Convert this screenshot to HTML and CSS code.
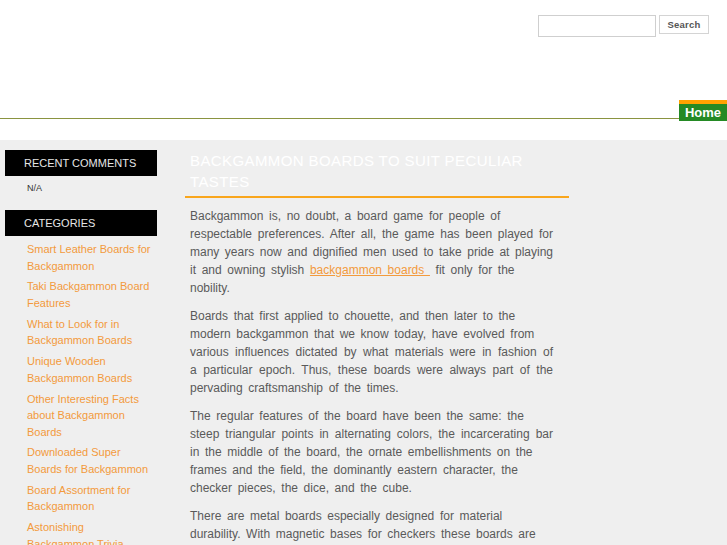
FILE: index.html
```html
<!DOCTYPE html>
<html>
<head>
<meta charset="utf-8">
<title>Backgammon Boards</title>
<link rel="stylesheet" href="styles.css">
</head>
<body>
<header class="header">
  <form class="search">
    <input class="search-input" type="text">
    <button class="search-btn" type="button">Search</button>
  </form>
  <nav class="nav">
    <a class="nav-home" href="#">Home</a>
  </nav>
</header>
<div class="main">
  <aside class="sidebar">
    <h3 class="widget-title">Recent Comments</h3>
    <ul class="recent">
      <li>N/A</li>
    </ul>
    <h3 class="widget-title">Categories</h3>
    <ul class="cats">
      <li><a href="#">Smart Leather Boards for Backgammon</a></li>
      <li><a href="#">Taki Backgammon Board Features</a></li>
      <li><a href="#">What to Look for in Backgammon Boards</a></li>
      <li><a href="#">Unique Wooden Backgammon Boards</a></li>
      <li><a href="#">Other Interesting Facts about Backgammon Boards</a></li>
      <li><a href="#">Downloaded Super Boards for Backgammon</a></li>
      <li><a href="#">Board Assortment for Backgammon</a></li>
      <li><a href="#">Astonishing Backgammon Trivia</a></li>
    </ul>
  </aside>
  <article class="content">
    <h1 class="post-title">Backgammon Boards to Suit Peculiar Tastes</h1>
    <div class="post-body">
      <p><span class="ln">Backgammon is, no doubt, a board game for people of</span><span class="ln full">respectable preferences. After all, the game has been played for</span><span class="ln full">many years now and dignified men used to take pride at playing</span><span class="ln">it and owning stylish <a href="#">backgammon boards&nbsp;</a> fit only for the</span><span class="ln">nobility.</span></p>
      <p><span class="ln">Boards that first applied to chouette, and then later to the</span><span class="ln">modern backgammon that we know today, have evolved from</span><span class="ln full">various influences dictated by what materials were in fashion of</span><span class="ln full">a particular epoch. Thus, these boards were always part of the</span><span class="ln">pervading craftsmanship of the times.</span></p>
      <p><span class="ln">The regular features of the board have been the same: the</span><span class="ln full">steep triangular points in alternating colors, the incarcerating bar</span><span class="ln">in the middle of the board, the ornate embellishments on the</span><span class="ln">frames and the field, the dominantly eastern character, the</span><span class="ln">checker pieces, the dice, and the cube.</span></p>
      <p><span class="ln">There are metal boards especially designed for material</span><span class="ln">durability. With magnetic bases for checkers these boards are</span></p>
    </div>
  </article>
</div>
</body>
</html>
```

FILE: styles.css
```css
html, body {
  margin: 0;
  padding: 0;
  background: #ffffff;
  font-family: "Liberation Sans", Arial, sans-serif;
}

.header {
  height: 118px;
  border-bottom: 1px solid #8a9440;
  display: flex;
  flex-direction: column;
  align-items: flex-end;
  justify-content: space-between;
  box-sizing: content-box;
}

.search {
  display: flex;
  align-items: flex-start;
  gap: 3px;
  margin: 15px 18px 0 0;
}

.search-input {
  width: 118px;
  height: 22px;
  box-sizing: border-box;
  border: 1px solid #cfcfcf;
  margin: 0;
  padding: 2px;
  background: #fff;
}

.search-btn {
  width: 50px;
  height: 19px;
  box-sizing: border-box;
  border: 1px solid #d4d4d4;
  background: #fff;
  margin: 0;
  padding: 0;
  font-family: "Liberation Sans", Arial, sans-serif;
  font-size: 9.5px;
  font-weight: bold;
  color: #555;
  letter-spacing: 0.2px;
}

.nav {
  margin-bottom: -3px;
  display: flex;
}

.nav-home {
  display: block;
  width: 48px;
  height: 17px;
  border-top: 4px solid #ffa200;
  background: #248a24;
  color: #ffffff;
  font-size: 13px;
  font-weight: bold;
  line-height: 17px;
  text-align: center;
  text-decoration: none;
}

.main {
  margin-top: 21px;
  background: #efefef;
  min-height: 420px;
  display: flex;
  align-items: flex-start;
  padding: 10px 0 0 5px;
}

.sidebar {
  width: 152px;
  flex: none;
}

.widget-title {
  margin: 0;
  height: 26px;
  background: #000000;
  color: #e6e6e6;
  font-size: 11px;
  font-weight: normal;
  text-transform: uppercase;
  line-height: 26px;
  padding-left: 19px;
}

.recent {
  list-style: none;
  margin: 0 0 14px 0;
  padding: 4px 0 0 22px;
  font-size: 9px;
  line-height: 16px;
  color: #333;
}

.cats {
  list-style: none;
  margin: 0;
  padding: 5px 5px 0 22px;
  font-size: 11px;
  line-height: 16.5px;
}

.cats li {
  margin-bottom: 4.4px;
}

.cats a {
  color: #f39a3c;
  text-decoration: none;
}

.content {
  width: 384px;
  margin-left: 28px;
  flex: none;
}

.post-title {
  margin: 0;
  padding: 0 5px 4px 5px;
  border-bottom: 2px solid #f9a61c;
  color: #ffffff;
  font-size: 15px;
  font-weight: normal;
  line-height: 21px;
  text-transform: uppercase;
  letter-spacing: 0.4px;
}

.post-body {
  padding: 9px 16px 0 5px;
  font-size: 12px;
  line-height: 18px;
  color: #5a5a5a;
}

.post-body p {
  margin: 0 0 10px 0;
}

.ln {
  display: block;
  white-space: nowrap;
  word-spacing: 2.3px;
}

.ln.full {
  text-align: justify;
  text-align-last: justify;
  word-spacing: 0;
}

.post-body a {
  color: #f39a3c;
  text-decoration: underline;
}
```
